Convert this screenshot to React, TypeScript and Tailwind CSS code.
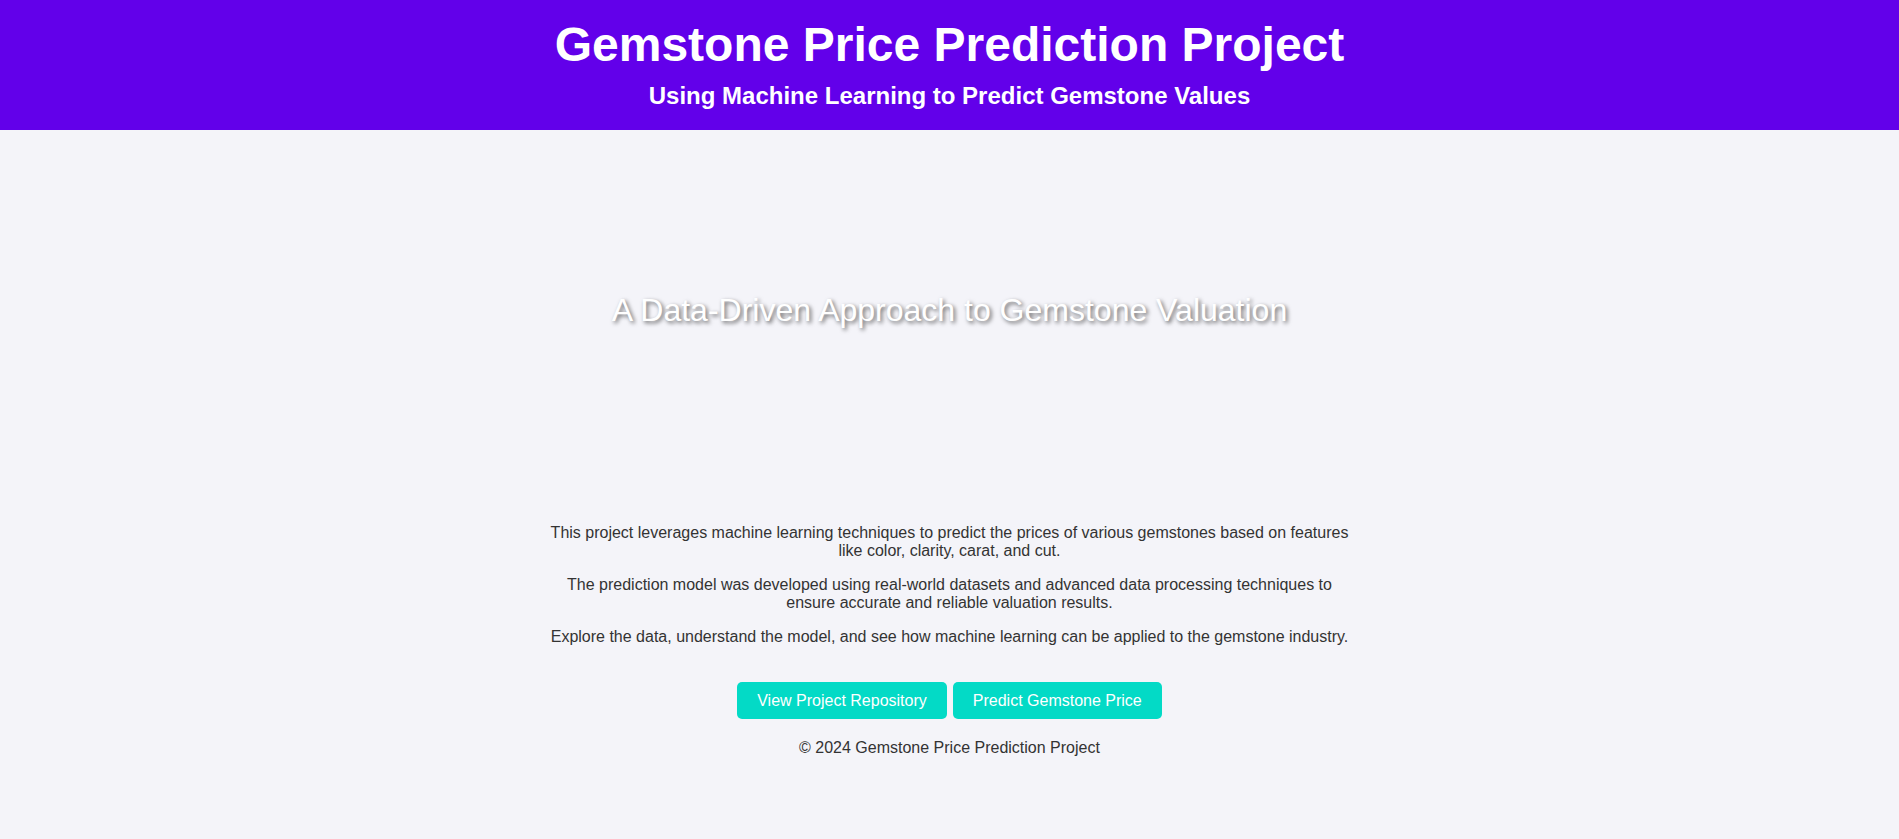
import React from "react";

const App: React.FC = () => {
  return (
    <div className="min-h-screen bg-[#f4f4f9] text-[#333] leading-[normal] font-['Liberation_Sans',Arial,sans-serif]">
      {/* Header */}
      <header className="bg-[#6200ea] text-white text-center pt-[17px] pb-[20px]">
        <h1 className="text-[48px] font-bold leading-[normal]">
          Gemstone Price Prediction Project
        </h1>
        <h2 className="mt-[10px] text-[24px] font-bold leading-[normal]">
          Using Machine Learning to Predict Gemstone Values
        </h2>
      </header>

      {/* Hero */}
      <section className="h-[360px] flex items-center justify-center">
        <h2 className="text-[32px] leading-[normal] text-white [text-shadow:2px_2px_4px_rgba(0,0,0,0.6)]">
          A Data-Driven Approach to Gemstone Valuation
        </h2>
      </section>

      {/* About */}
      <section className="max-w-[800px] mx-auto text-center text-[16px] leading-[normal] pt-[34px]">
        <p>
          This project leverages machine learning techniques to predict the prices of various gemstones based on
          features like color, clarity, carat, and cut.
        </p>
        <p className="mt-4">
          The prediction model was developed using real-world datasets and advanced data processing techniques to
          ensure accurate and reliable valuation results.
        </p>
        <p className="mt-4">
          Explore the data, understand the model, and see how machine learning can be applied to the gemstone
          industry.
        </p>

        <div className="mt-[36px] flex justify-center gap-[6px]">
          <a className="bg-[#03dac6] text-white px-5 py-[9.5px] rounded-[5px] cursor-pointer">
            View Project Repository
          </a>
          <a className="bg-[#03dac6] text-white px-5 py-[9.5px] rounded-[5px] cursor-pointer">
            Predict Gemstone Price
          </a>
        </div>
      </section>

      {/* Footer */}
      <footer className="text-center text-[16px] leading-[normal] mt-[20px] pb-5">
        © 2024 Gemstone Price Prediction Project
      </footer>
    </div>
  );
};

export default App;
